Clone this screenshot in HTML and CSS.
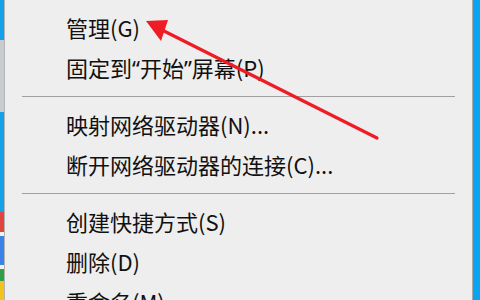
FILE: index.html
```html
<!DOCTYPE html>
<html lang="zh-CN">
<head>
    <meta charset="UTF-8">
    <title>右键菜单</title>
    <link rel="stylesheet" href="styles.css">
</head>
<body>
    <div class="screen">
        <div class="desk-left">
            <div class="blk blue" style="height:40px"></div>
            <div class="blk shot" style="height:72px"></div>
            <div class="blk blue" style="height:100px"></div>
            <div class="blk red" style="height:20px"></div>
            <div class="blk white" style="height:4px"></div>
            <div class="blk blue2" style="height:29px"></div>
            <div class="blk white" style="height:4px"></div>
            <div class="blk green" style="height:12px"></div>
            <div class="blk yellow" style="height:19px"></div>
        </div>

        <div class="menu">
            <div class="item">管理(G)</div>
            <div class="item">固定到<span class="q">“</span>开始<span class="q">”</span>屏幕(P)</div>
            <div class="sep"></div>
            <div class="item">映射网络驱动器(N)...</div>
            <div class="item">断开网络驱动器的连接(C)...</div>
            <div class="sep"></div>
            <div class="item">创建快捷方式(S)</div>
            <div class="item">删除(D)</div>
            <div class="item">重命名(M)</div>
        </div>

        <div class="desk-right"></div>

        <!-- red annotation arrow drawn over the menu -->
        <svg class="arrow" width="480" height="300" viewBox="0 0 480 300">
            <line x1="160" y1="29" x2="377" y2="138" stroke="#ee1c25" stroke-width="3.2" stroke-linecap="round"/>
            <polygon points="146,21 168,20 161,41" fill="#ee1c25"/>
        </svg>
    </div>
</body>
</html>
```

FILE: styles.css
```css
body {
    margin: 0;
    background: #eeeeee;
}
.screen {
    position: relative;
    display: flex;
    width: 480px;
    height: 300px;
    overflow: hidden;
    font-family: "Noto Sans CJK SC", "Noto Sans", sans-serif;
}
.desk-left {
    width: 4px;
    display: flex;
    flex-direction: column;
    border-right: 1px solid #b4b4b4;
}
.blk {
    flex-shrink: 0;
}
.blue { background: #13a1ec; }
.blue2 { background: #3b82e8; }
.shot { background: #c9cccf; }
.red { background: #e0443a; }
.white { background: #f2f2f2; }
.green { background: #2f9e4a; }
.yellow { background: #f4c21c; }
.menu {
    flex: 1;
    background: #eeeeee;
    padding-top: 7px;
}
.item {
    height: 40px;
    line-height: 40px;
    padding-left: 61px;
    font-size: 22px;
    color: #111;
    white-space: nowrap;
}
.q {
    font-family: "Noto Sans", sans-serif;
}
.sep {
    margin: 9px 17px 7px;
    border-top: 1px solid #a0a0a0;
}
.desk-right {
    width: 7px;
    border-left: 1px solid #a9a9a9;
    background: #0aa3f0;
}
.arrow {
    position: absolute;
    left: 0;
    top: 0;
}
```
